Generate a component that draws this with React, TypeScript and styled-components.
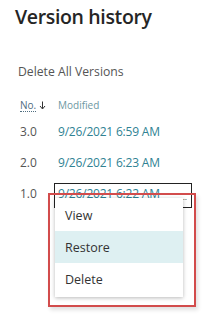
import React from 'react';
import styled, { createGlobalStyle } from 'styled-components';

const GlobalStyle = createGlobalStyle`
  html, body {
    margin: 0;
    padding: 0;
    background: #ffffff;
  }
  body {
    font-family: 'Open Sans', 'Noto Sans', 'Liberation Sans', sans-serif;
    -webkit-font-smoothing: antialiased;
  }
`;

const Page = styled.div`
  position: relative;
  width: 214px;
  height: 328px;
  overflow: hidden;
  padding: 2px 0 0 15px;
  box-sizing: border-box;
`;

const Title = styled.h1`
  margin: 0;
  font-size: 19.5px;
  font-weight: 600;
  line-height: 30px;
  color: #252525;
  letter-spacing: -0.35px;
`;

const DeleteAll = styled.div`
  margin: 31px 0 0 3px;
  font-size: 12.2px;
  line-height: 18px;
  color: #555;
`;

const Table = styled.div`
  margin: 13px 0 0 5px;
  display: flex;
  flex-direction: column;
`;

const Row = styled.div<{ $head?: boolean }>`
  display: grid;
  grid-template-columns: 38px 1fr;
  align-items: center;
  height: ${(p) => (p.$head ? 22 : 31)}px;
`;

const NoHead = styled.span`
  display: flex;
  align-items: center;
  gap: 3px;
  font-size: 10px;
  color: #4f6d80;
`;

const Dotted = styled.span`
  border-bottom: 1px dotted #4f6d80;
  line-height: 12px;
`;

const ModHead = styled.span`
  font-size: 10px;
  color: #6d98a2;
`;

const Num = styled.span`
  font-size: 12px;
  color: #555;
`;

const DateLink = styled.span`
  font-size: 12px;
  color: #2f8293;
  letter-spacing: -0.2px;
`;

const FocusBox = styled.div`
  position: absolute;
  left: 54px;
  top: 183px;
  width: 138px;
  height: 25px;
  border: 1px solid #222;
  box-sizing: border-box;
`;

const Dots = styled.span`
  position: absolute;
  right: 4px;
  top: 9px;
  font-size: 8px;
  color: #333;
  line-height: 8px;
`;

const Menu = styled.div`
  position: absolute;
  left: 55px;
  top: 198px;
  width: 128px;
  padding: 1px 0 2px;
  background: #fff;
  box-shadow: 0 1px 4px rgba(0, 0, 0, 0.28);
  display: flex;
  flex-direction: column;
`;

const Item = styled.div<{ $active?: boolean }>`
  height: 32px;
  display: flex;
  align-items: center;
  padding-left: 10px;
  font-size: 12.5px;
  color: #333;
  background: ${(p) => (p.$active ? '#def0f2' : 'transparent')};
`;

const Annotation = styled.div`
  position: absolute;
  left: 48px;
  top: 193px;
  width: 148px;
  height: 114px;
  border: 2px solid #d24c4c;
  box-sizing: border-box;
  box-shadow: 2px 3px 4px rgba(0, 0, 0, 0.12);
`;

const versions = [
  { no: '3.0', date: '9/26/2021 6:59 AM' },
  { no: '2.0', date: '9/26/2021 6:23 AM' },
  { no: '1.0', date: '9/26/2021 6:22 AM' },
];

const App: React.FC = () => {
  return (
    <>
      <GlobalStyle />
      <Page>
        <Title>Version history</Title>
        <DeleteAll>Delete All Versions</DeleteAll>
        <Table>
          <Row $head>
            <NoHead>
              <Dotted>No.</Dotted>
              <svg width="7" height="9" viewBox="0 0 7 9">
                <path d="M3.5 0.5v7M1 5l2.5 3L6 5" stroke="#333" strokeWidth="1" fill="none" />
              </svg>
            </NoHead>
            <ModHead>Modified</ModHead>
          </Row>
          {versions.map((v) => (
            <Row key={v.no}>
              <Num>{v.no}</Num>
              <DateLink>{v.date}</DateLink>
            </Row>
          ))}
        </Table>
        <FocusBox>
          <Dots>…</Dots>
        </FocusBox>
        <Menu>
          <Item>View</Item>
          <Item $active>Restore</Item>
          <Item>Delete</Item>
        </Menu>
        <Annotation />
      </Page>
    </>
  );
};

export default App;
